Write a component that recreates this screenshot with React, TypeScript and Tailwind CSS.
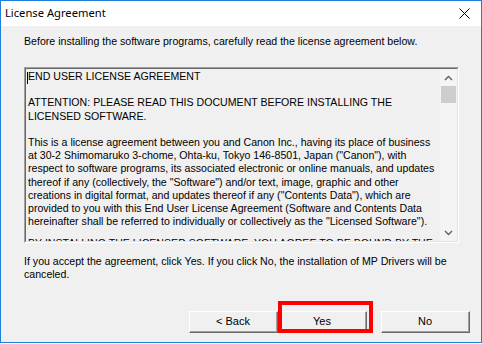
import React from "react";

const lines: string[][] = [
  ["END USER LICENSE AGREEMENT"],
  ["ATTENTION: PLEASE READ THIS DOCUMENT BEFORE INSTALLING THE", "LICENSED SOFTWARE."],
  [
    "This is a license agreement between you and Canon Inc., having its place of business",
    'at 30-2 Shimomaruko 3-chome, Ohta-ku, Tokyo 146-8501, Japan ("Canon"), with',
    "respect to software programs, its associated electronic or online manuals, and updates",
    'thereof if any (collectively, the "Software") and/or text, image, graphic and other',
    'creations in digital format, and updates thereof if any ("Contents Data"), which are',
    "provided to you with this End User License Agreement (Software and Contents Data",
    'hereinafter shall be referred to individually or collectively as the "Licensed Software").',
  ],
  ["BY INSTALLING THE LICENSED SOFTWARE, YOU AGREE TO BE BOUND BY THE"],
];

function Chevron({ down }: { down?: boolean }) {
  return (
    <svg width="9" height="6" viewBox="0 0 9 6" className={down ? "rotate-180" : ""}>
      <path d="M1 5 L4.5 1.5 L8 5" fill="none" stroke="#606060" strokeWidth="1.4" />
    </svg>
  );
}

function Button({ label }: { label: string }) {
  return (
    <div className="w-[89px] h-[22px] border-t border-l border-white border-b border-r border-b-[#696969] border-r-[#696969] bg-[#f0f0f0]">
      <div className="h-full flex items-center justify-center border-b border-r border-[#a0a0a0] text-[11px] text-black">
        {label}
      </div>
    </div>
  );
}

export default function App() {
  return (
    <div
      className="w-[482px] h-[344px] bg-white"
      style={{ fontFamily: '"Liberation Sans", Arial, sans-serif' }}
    >
      <div className="h-[343px] border border-[#1e80d8] flex flex-col">
        <div className="h-[25px] bg-white flex items-center justify-between pl-[4px] pr-[11px]">
          <span className="text-[11.2px] text-black" style={{ fontFamily: '"Noto Sans", sans-serif' }}>
            License Agreement
          </span>
          <svg width="11" height="11" viewBox="0 0 11 11">
            <path d="M0.5 0.5 L10.5 10.5 M10.5 0.5 L0.5 10.5" stroke="#000" strokeWidth="1" />
          </svg>
        </div>
        <div className="flex-1 bg-[#f0f0f0] relative pl-[23px] pr-[11px] pt-[9px] text-[10.6px] leading-[13px] text-black">
          <p>Before installing the software programs, carefully read the license agreement below.</p>

          <div className="mt-[19px] w-[435px] h-[176px] border-t border-l border-[#a0a0a0] border-b border-r border-b-white border-r-white">
            <div className="h-full flex border-t border-l border-[#696969] border-b border-r border-b-[#e3e3e3] border-r-[#e3e3e3]">
              <div className="flex-1 overflow-hidden pl-[2px] pt-[1px] relative leading-[13.2px]">
                <span className="absolute left-[1px] top-[3px] w-px h-[12px] bg-black" />
                {lines.map((p, i) => (
                  <div key={i} className={i === 3 ? "mt-[9px]" : i > 0 ? "mt-[13.2px]" : ""}>
                    {p.map((l) => (
                      <div key={l} className="whitespace-nowrap">
                        {l}
                      </div>
                    ))}
                  </div>
                ))}
              </div>
              <div className="w-[17px] flex flex-col bg-[#f4f4f4]">
                <div className="h-[17px] flex items-center justify-center">
                  <Chevron />
                </div>
                <div className="h-[17px] bg-[#cdcdcd] mx-[1px]" />
                <div className="flex-1" />
                <div className="h-[17px] flex items-center justify-center">
                  <Chevron down />
                </div>
              </div>
            </div>
          </div>

          <p className="mt-[12px]">
            If you accept the agreement, click Yes. If you click No, the installation of MP Drivers will be
            <br />
            canceled.
          </p>

          <div className="mt-[30px] flex justify-end">
            <Button label="< Back" />
            <Button label="Yes" />
            <div className="w-[14px]" />
            <Button label="No" />
          </div>

          <div className="absolute left-[277px] top-[275px] w-[95px] h-[32px] border-[4px] border-[#ff0000]" />
        </div>
      </div>
    </div>
  );
}
